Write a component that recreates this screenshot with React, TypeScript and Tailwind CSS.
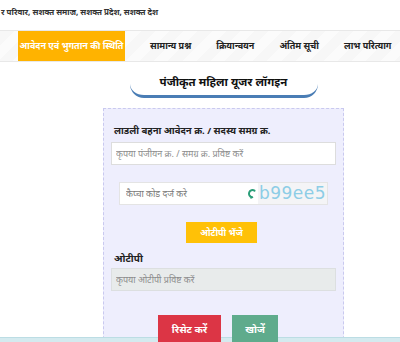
const navItems = ['सामान्य प्रश्न', 'क्रियान्वयन', 'अंतिम सूची', 'लाभ परित्याग'];

function RefreshIcon() {
  return (
    <svg width="9" height="11" viewBox="0 0 9 11" fill="none">
      <path d="M7.5 2.6A3.6 3.6 0 1 0 5 9.2" stroke="#2a9d78" strokeWidth="2" strokeLinecap="round" />
      <path d="M3.2 7.4 L6.6 9.3 L3.6 10.9 Z" fill="#2a9d78" />
    </svg>
  );
}

export default function App() {
  return (
    <div
      className="relative h-[342px] w-[400px] overflow-hidden bg-white text-[#222]"
      style={{ fontFamily: '"Noto Sans", "Liberation Sans", sans-serif' }}
    >
      {/* tagline */}
      <div className="h-[30px] pl-[1px] pt-[5px] text-[8px] font-bold leading-[14px] text-[#333] whitespace-nowrap">
        र परिवार, सशक्त समाज, सशक्त प्रदेश, सशक्त देश
      </div>

      {/* main nav */}
      <nav className="flex h-[32px] items-stretch border-y border-[#e8e8e8] bg-[repeating-linear-gradient(135deg,#f7f7f7_0px,#f7f7f7_10px,#fbfbfb_10px,#fbfbfb_20px)] pl-[18px] whitespace-nowrap">
        <div className="flex w-[107px] items-center justify-center bg-[#ffb300] text-[9px] font-bold text-white">
          आवेदन एवं भुगतान की स्थिति
        </div>
        <div className="flex items-center gap-[25px] pl-[25px] text-[9px] font-bold text-[#222]">
          {navItems.map((item) => (
            <span key={item}>{item}</span>
          ))}
        </div>
      </nav>

      {/* heading */}
      <div className="flex justify-center pt-[10px] pl-[47px]">
        <div className="w-[188px] rounded-b-[14px] border-b-[3px] border-[#4a7db5] pb-[3px] text-center text-[11.5px] font-bold leading-[20px] text-[#111]">
          पंजीकृत महिला यूजर लॉगइन
        </div>
      </div>

      {/* login panel */}
      <div className="ml-[103px] mt-[10px] w-[241px] border border-dashed border-[#c9c9ef] bg-[#eeeefd] px-[7px] pb-[20px] pt-[14px]">
        <label className="block pl-[3px] text-[9.5px] font-bold leading-[16px] text-[#222]">
          लाडली बहना आवेदन क्र. / सदस्य समग्र क्र.
        </label>
        <input
          className="mt-[3px] block h-[23px] w-full border border-[#dddddd] bg-white px-[4px] text-[9px] outline-none placeholder:text-[#8c8c8c]"
          placeholder="कृपया पंजीयन क्र. / समग्र क्र. प्रविष्ट करें"
        />

        <div className="mx-[8px] mt-[17px] flex h-[23px] border border-[#e4e4e4] bg-white">
          <input
            className="h-full min-w-0 flex-1 bg-white px-[6px] text-[9px] outline-none placeholder:text-[#777]"
            placeholder="कैप्चा कोड दर्ज करे"
          />
          <div className="flex items-center pr-[2px]">
            <RefreshIcon />
          </div>
          <div className="flex w-[69px] items-center justify-center bg-[#f4f4f6] text-[17px] leading-none tracking-[0.5px] text-[#8dcde6]" style={{ fontFamily: '"DejaVu Sans", sans-serif' }}>
            b99ee5
          </div>
        </div>

        <div className="mt-[17px] flex justify-center pr-[4px]">
          <button className="h-[21px] w-[71px] bg-[#ffc107] text-[9px] font-bold text-white">
            ओटीपी भेंजे
          </button>
        </div>

        <label className="mt-[7px] block pl-[3px] text-[10px] font-bold leading-[16px] text-[#222]">
          ओटीपी
        </label>
        <input
          disabled
          className="mt-[2px] block h-[23px] w-full border border-[#dcdfe0] bg-[#e8ebeb] px-[4px] text-[9px] placeholder:text-[#8c8c8c]"
          placeholder="कृपया ओटीपी प्रविष्ट करें"
        />

        <div className="relative z-10 mt-[24px] flex justify-center gap-[11px] pr-[11px]">
          <button className="h-[28px] w-[63px] bg-[#dc3545] text-[10px] font-bold text-white">
            रिसेट करें
          </button>
          <button className="h-[28px] w-[46px] bg-[#5fab8c] text-[10px] font-bold text-white">
            खोजें
          </button>
        </div>
      </div>

      {/* bottom strip */}
      <div className="absolute bottom-0 left-0 flex h-[5px] w-full border-t border-[#bcdde4] bg-[#d4eaef]">
        <div className="ml-[245px] mt-[1px] h-[3px] w-[20px] bg-white" />
      </div>
    </div>
  );
}
